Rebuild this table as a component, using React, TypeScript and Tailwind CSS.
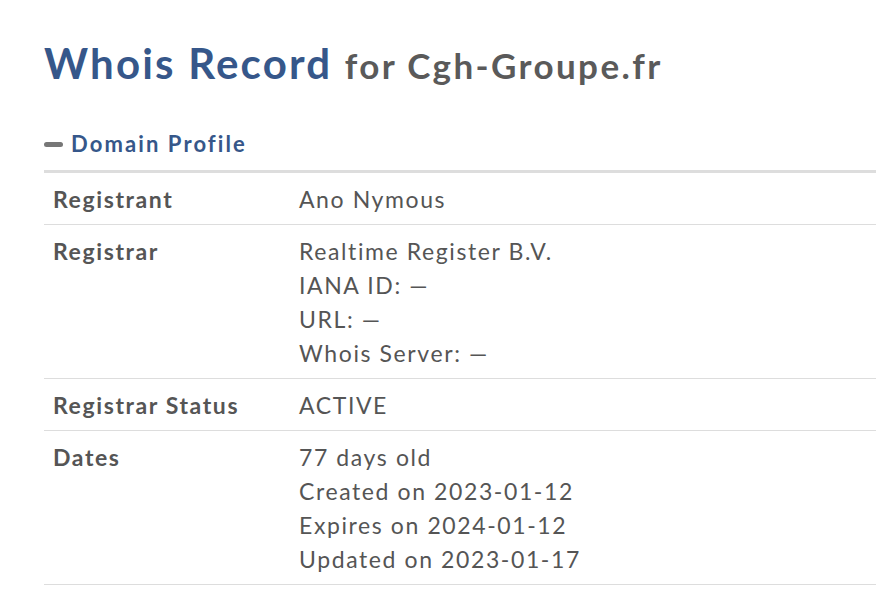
import React from "react";

type Row = { label: string; values: string[] };

const rows: Row[] = [
  { label: "Registrant", values: ["Ano Nymous"] },
  {
    label: "Registrar",
    values: ["Realtime Register B.V.", "IANA ID: —", "URL: —", "Whois Server: —"],
  },
  { label: "Registrar Status", values: ["ACTIVE"] },
  {
    label: "Dates",
    values: [
      "77 days old",
      "Created on 2023-01-12",
      "Expires on 2024-01-12",
      "Updated on 2023-01-17",
    ],
  },
];

const App = () => {
  return (
    <div className="min-h-[590px] bg-white pl-11 pt-[35px] font-['Lato',sans-serif] text-[#555]">
      <h1 className="whitespace-nowrap text-[42px] font-bold leading-[56px] tracking-[2.2px] text-[#36578a]">
        Whois Record{" "}
        <span className="text-[35px] tracking-[2.4px] text-[#5a5a5a]">for Cgh-Groupe.fr</span>
      </h1>
      <div className="mt-[36px] flex items-center gap-2">
        <span className="block h-[5px] w-[19px] rounded-sm bg-[#777]" />
        <h2 className="text-[22px] font-bold leading-[30px] tracking-[2.1px] text-[#36578a]">
          Domain Profile
        </h2>
      </div>
      <div className="mt-[11px] border-t-[3px] border-[#ddd]">
        {rows.map((row) => (
          <div
            key={row.label}
            className="flex border-b border-[#ddd] pt-[9px] pb-[8px] text-[23px] leading-[34px] tracking-[1.6px]"
          >
            <div className="w-[255px] shrink-0 pl-[9px] font-bold">{row.label}</div>
            <div>
              {row.values.map((v) => (
                <div key={v}>{v}</div>
              ))}
            </div>
          </div>
        ))}
      </div>
    </div>
  );
};

export default App;
